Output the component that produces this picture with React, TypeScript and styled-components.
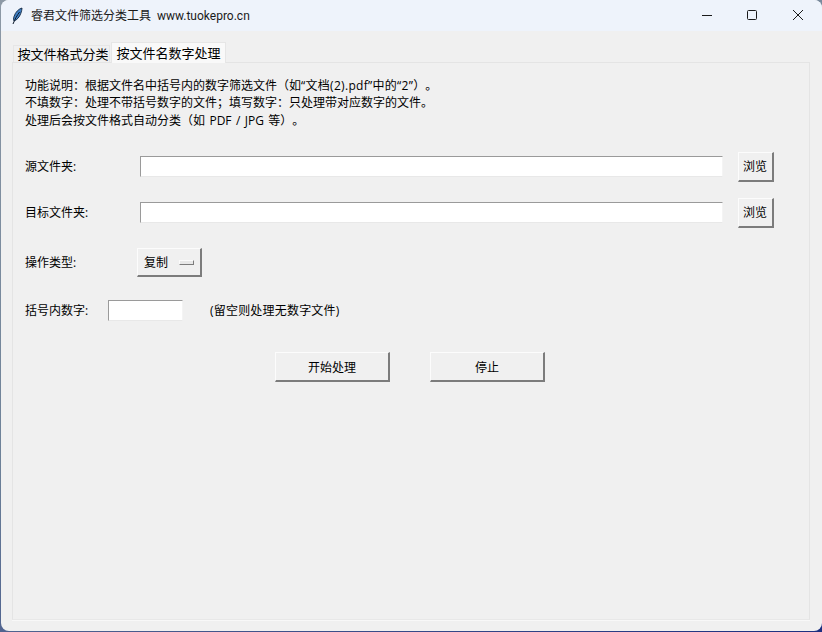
import styled, { createGlobalStyle } from 'styled-components';

const GlobalStyle = createGlobalStyle`
  html, body {
    margin: 0;
    padding: 0;
    width: 822px;
    height: 632px;
    overflow: hidden;
    background: linear-gradient(160deg, #8d99a6 0%, #6d8198 50%, #1c2f80 100%);
  }
  * { box-sizing: border-box; }
`;

const Window = styled.div`
  width: 821px;
  height: 631px;
  margin-left: 1px;
  border-radius: 8px;
  overflow: hidden;
  background: #f0f0f0;
  display: flex;
  flex-direction: column;
  font-family: "Open Sans", "Noto Sans CJK SC", sans-serif;
  font-size: 12px;
  color: #000;
`;

const TitleBar = styled.div`
  height: 31px;
  flex: none;
  background: #eef3fb;
  display: flex;
  align-items: center;
  padding-left: 9px;
`;

const TitleText = styled.span`
  margin-left: 7px;
  font-family: Roboto, "Noto Sans CJK SC", sans-serif;
  font-size: 12px;
  line-height: 16px;
  color: #1a1a1a;
  white-space: pre;
`;

const WinButtons = styled.div`
  margin-left: auto;
  padding-right: 1px;
  display: flex;
  height: 100%;
`;

const WinButton = styled.div`
  width: 46px;
  display: flex;
  align-items: center;
  justify-content: center;
  margin-top: -2px;
`;

const Body = styled.div`
  flex: 1;
  padding: 10px 12px 11px 11px;
  display: flex;
  flex-direction: column;
  min-height: 0;
`;

const TabRow = styled.div`
  height: 21px;
  flex: none;
  display: flex;
  align-items: flex-end;
  padding-left: 1px;
  position: relative;
  z-index: 1;
`;

const Tab = styled.div<{ $active?: boolean }>`
  height: ${(p) => (p.$active ? '21px' : '17px')};
  width: ${(p) => (p.$active ? '115px' : '97px')};
  margin-left: ${(p) => (p.$active ? '1px' : '0')};
  margin-bottom: ${(p) => (p.$active ? '-1px' : '0')};
  padding-left: ${(p) => (p.$active ? '0' : '3px')};
  background: ${(p) => (p.$active ? '#f9f9f9' : '#f0f0f0')};
  border: 1px solid #e6e6e6;
  border-bottom: none;
  display: flex;
  align-items: center;
  justify-content: center;
  font-size: 13px;
  line-height: 16px;
  white-space: nowrap;
`;

const Panel = styled.div`
  flex: 1;
  width: 798px;
  border: 1px solid #e4e4e4;
  border-bottom-color: #e8e8e8;
  box-shadow: 0 1px 0 #f8f8f8;
  padding: 14px 12px 0 12px;
`;

const Description = styled.div`
  height: 54px;
  margin-bottom: 21px;
`;

const DescriptionLine = styled.div<{ $gap?: number }>`
  font-size: 12px;
  line-height: 17px;
  height: 17px;
  margin-bottom: ${(p) => p.$gap ?? 0}px;
  text-spacing-trim: space-all;
  word-spacing: 1.3px;
  white-space: pre;
`;

const QuotedPart = styled.span`
  letter-spacing: 0.3px;
`;

const Row = styled.div<{ $height: number; $gap?: number }>`
  display: flex;
  align-items: center;
  height: ${(p) => p.$height}px;
  margin-bottom: ${(p) => p.$gap ?? 0}px;
`;

const Label = styled.label<{ $width?: number }>`
  width: ${(p) => p.$width ?? 115}px;
  flex: none;
  line-height: 16px;
  white-space: nowrap;
`;

const Entry = styled.div<{ $width: number }>`
  width: ${(p) => p.$width}px;
  height: 21px;
  flex: none;
  background: #fff;
  border-top: 1px solid #9a9a9a;
  border-left: 1px solid #9a9a9a;
  border-right: 1px solid #f4f4f4;
  border-bottom: 1px solid #e8e8e8;
`;

const PathEntry = styled(Entry)`
  margin-bottom: 1px;
`;

const raised = `
  background: #f0f0f0;
  border-top: 1px solid #fcfcfc;
  border-left: 1px solid #fcfcfc;
  border-right: 2px solid #7c7c7c;
  border-bottom: 2px solid #7c7c7c;
`;

const BrowseButton = styled.div`
  ${raised}
  width: 36px;
  height: 30px;
  margin-left: 15px;
  padding: 0 1px 1px 0;
  flex: none;
  display: flex;
  align-items: center;
  justify-content: center;
`;

const OptionMenu = styled.div`
  ${raised}
  width: 65px;
  height: 29px;
  margin-left: -3px;
  display: flex;
  align-items: center;
  padding-left: 6px;
`;

const MenuIndicator = styled.span`
  width: 15px;
  height: 5px;
  margin-left: 11px;
  background: #e8e8e8;
  border-top: 1px solid #fbfbfb;
  border-left: 1px solid #fbfbfb;
  border-right: 1px solid #7c7c7c;
  border-bottom: 1px solid #7c7c7c;
`;

const Hint = styled.span`
  margin-left: 27px;
  line-height: 16px;
  letter-spacing: 0.2px;
`;

const Actions = styled.div`
  display: flex;
  gap: 40px;
  padding-left: 250px;
  margin-top: 31px;
`;

const ActionButton = styled.div`
  ${raised}
  width: 115px;
  height: 30px;
  display: flex;
  align-items: center;
  justify-content: center;
`;

export default function App() {
  return (
    <>
      <GlobalStyle />
      <Window>
        <TitleBar>
          <svg width="14" height="18" viewBox="0 0 14 18">
            <path d="M12 1C8.5 2 5.5 5 4 9.5 3.4 11.6 3.4 13 4 14 7 13 9.5 10 10.8 6.4 11.5 4.4 12 2.6 12 1Z" fill="#3f80c6" stroke="#12263e" strokeWidth="0.9" />
            <path d="M9.6 5C7.2 8 5 12 3 17" fill="none" stroke="#0d1a2b" strokeWidth="1" />
          </svg>
          <TitleText>睿君文件筛选分类工具  www.tuokepro.cn</TitleText>
          <WinButtons>
            <WinButton>
              <svg width="12" height="12" viewBox="0 0 12 12">
                <path d="M2 6.5H12" stroke="#1a1a1a" strokeWidth="1" />
              </svg>
            </WinButton>
            <WinButton>
              <svg width="12" height="12" viewBox="0 0 12 12">
                <rect x="1.5" y="1.5" width="9" height="9" rx="1" fill="none" stroke="#1a1a1a" strokeWidth="1" />
              </svg>
            </WinButton>
            <WinButton>
              <svg width="12" height="12" viewBox="0 0 12 12">
                <path d="M1 1L11 11M11 1L1 11" stroke="#1a1a1a" strokeWidth="1" />
              </svg>
            </WinButton>
          </WinButtons>
        </TitleBar>
        <Body>
          <TabRow>
            <Tab>按文件格式分类</Tab>
            <Tab $active>按文件名数字处理</Tab>
          </TabRow>
          <Panel>
            <Description>
              <DescriptionLine>
                功能说明：根据文件名中括号内的数字筛选文件（如<QuotedPart>“文档(2).pdf”中的“2”</QuotedPart>）。
              </DescriptionLine>
              <DescriptionLine $gap={1}>不填数字：处理不带括号数字的文件；填写数字：只处理带对应数字的文件。</DescriptionLine>
              <DescriptionLine>处理后会按文件格式自动分类（如 PDF / JPG 等）。</DescriptionLine>
            </Description>
            <Row $height={30} $gap={16}>
              <Label>源文件夹:</Label>
              <PathEntry $width={583} />
              <BrowseButton>浏览</BrowseButton>
            </Row>
            <Row $height={30} $gap={20}>
              <Label>目标文件夹:</Label>
              <PathEntry $width={583} />
              <BrowseButton>浏览</BrowseButton>
            </Row>
            <Row $height={29} $gap={23}>
              <Label>操作类型:</Label>
              <OptionMenu>
                复制
                <MenuIndicator />
              </OptionMenu>
            </Row>
            <Row $height={21}>
              <Label $width={83}>括号内数字:</Label>
              <Entry $width={75} />
              <Hint>(留空则处理无数字文件)</Hint>
            </Row>
            <Actions>
              <ActionButton>开始处理</ActionButton>
              <ActionButton>停止</ActionButton>
            </Actions>
          </Panel>
        </Body>
      </Window>
    </>
  );
}
